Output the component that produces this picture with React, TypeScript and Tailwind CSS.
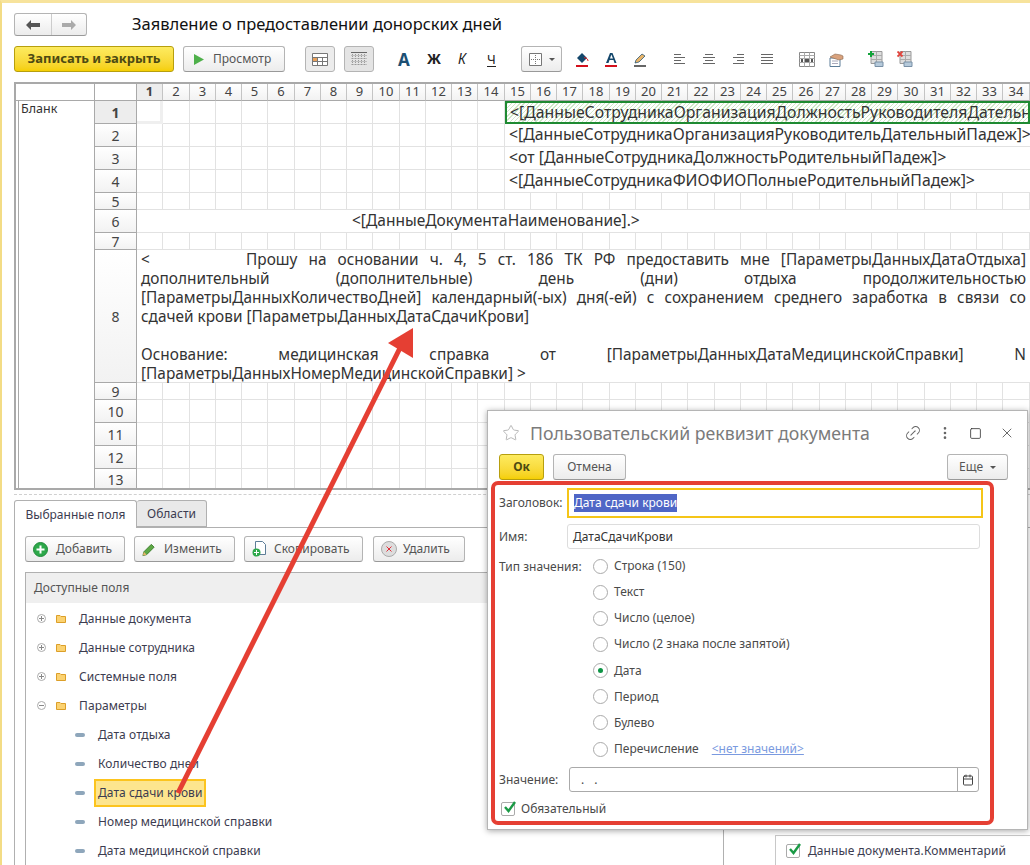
import { Calendar, Link2, MoreVertical, Square, Star, X } from "lucide-react";

const colWidths =
  "grid-cols-[42px_26px_27px_26px_26px_26px_27px_26px_26px_26px_27px_26px_26px_26px_27px_26px_26px_26px_27px_26px_26px_26px_27px_26px_26px_26px_27px_26px_26px_26px_27px_26px_26px_26px_27px]";
const rowHeights = "grid-rows-[17px_23px_23px_23px_23px_17px_23px_17px_133px_17px_23px_23px_23px_21px]";

const columns = Array.from({ length: 34 }, (_, i) => i + 1);
const rows = [1, 2, 3, 4, 5, 6, 7, 8, 9, 10, 11, 12, 13];

const mergedRows: Record<number, string> = {
  1: "<[ДанныеСотрудникаОрганизацияДолжностьРуководителяДательныйПадеж]>",
  2: "<[ДанныеСотрудникаОрганизацияРуководительДательныйПадеж]>",
  3: "<от [ДанныеСотрудникаДолжностьРодительныйПадеж]>",
  4: "<[ДанныеСотрудникаФИОФИОПолныеРодительныйПадеж]>",
};

const treeItems = [
  { label: "Данные документа", kind: "closed" },
  { label: "Данные сотрудника", kind: "closed" },
  { label: "Системные поля", kind: "closed" },
  { label: "Параметры", kind: "open" },
  { label: "Дата отдыха", kind: "leaf" },
  { label: "Количество дней", kind: "leaf" },
  { label: "Дата сдачи крови", kind: "selected" },
  { label: "Номер медицинской справки", kind: "leaf" },
  { label: "Дата медицинской справки", kind: "leaf" },
];

const radioOptions = [
  "Строка (150)",
  "Текст",
  "Число (целое)",
  "Число (2 знака после запятой)",
  "Дата",
  "Период",
  "Булево",
  "Перечисление",
];

function FolderIcon() {
  return (
    <svg width="10" height="9" viewBox="0 0 10 9" className="shrink-0">
      <path d="M.5 1.500h3.500l1 1h4.500v6h-9z" fill="#fbd271" stroke="#dc9f29" />
    </svg>
  );
}

function Expander({ open }: { open: boolean }) {
  return (
    <svg width="9" height="9" viewBox="0 0 9 9" className="shrink-0">
      <circle cx="4.500" cy="4.500" r="4" fill="none" stroke="#aaa" />
      <path d={open ? "M2 4.500h5" : "M2 4.500h5M4.500 2v5"} stroke="#888" />
    </svg>
  );
}

function GreyButton({ className, children }: { className: string; children: React.ReactNode }) {
  return (
    <div
      className={`flex items-center rounded-[3px] border border-[#b4b4b4] border-b-[#999] bg-gradient-to-b from-white to-[#ececec] text-[#555] ${className}`}
    >
      {children}
    </div>
  );
}

function Spreadsheet() {
  return (
    <div className="mt-[10px] flex h-[408px] shrink-0 overflow-hidden border-y-2 border-l-2 border-y-[#a9a9a9] border-l-[#a9a9a9]">
      <div className="w-[78px] shrink-0">
        <div className="h-[17px] border-b border-[#a9a9a9]" />
        <div className="ml-[2px] h-full border-l border-[#a9a9a9] pl-[2px] text-[12.500px] leading-[16px] text-[#333]">Бланк</div>
      </div>
      <div className={`grid ${colWidths} ${rowHeights} border-l border-[#a9a9a9]`}>
        <div className="border-b border-r border-[#a9a9a9]" />
        {columns.map((c) => (
          <div
            key={c}
            className={`flex items-center justify-center border-b border-r border-[#c4c4c4] border-b-[#a9a9a9] text-[13px] ${
              c === 1 ? "bg-[#ededed] font-bold text-[#444]" : "bg-gradient-to-b from-white to-[#f2f2f2] text-[#444]"
            }`}
          >
            {c}
          </div>
        ))}
        {rows.map((r) => (
          <SheetRow key={r} row={r} />
        ))}
      </div>
    </div>
  );
}

function HeaderCell({ row }: { row: number }) {
  return (
    <div
      className={`flex items-center justify-center border-b border-r border-[#a9a9a9] text-[14px] text-[#444] ${
        row === 1 ? "bg-[#ededed] font-bold" : "bg-gradient-to-b from-white to-[#f2f2f2]"
      }`}
    >
      {row}
    </div>
  );
}

function SheetRow({ row }: { row: number }) {
  if (row === 8) {
    return (
      <>
        <HeaderCell row={row} />
        <div className="col-span-34 border-b border-[#e2e2e2] px-[4px] text-[15.400px] leading-[19px] text-[#333]">
          <div className="text-justify [text-align-last:justify]">
            <span className="inline-block w-[94px]">&lt;</span> Прошу на основании ч. 4, 5 ст. 186 ТК РФ предоставить мне [ПараметрыДанныхДатаОтдыха]
          </div>
          <div className="text-justify [text-align-last:justify]">дополнительный (дополнительные) день (дни) отдыха продолжительностью</div>
          <div className="text-justify [text-align-last:justify]">
            [ПараметрыДанныхКоличествоДней] календарный(-ых) дня(-ей) с сохранением среднего заработка в связи со
          </div>
          <div>сдачей крови [ПараметрыДанныхДатаСдачиКрови]</div>
          <div className="h-[19px]" />
          <div className="text-justify [text-align-last:justify]">Основание: медицинская справка от [ПараметрыДанныхДатаМедицинскойСправки] N</div>
          <div>[ПараметрыДанныхНомерМедицинскойСправки] &gt;</div>
        </div>
      </>
    );
  }
  const text = mergedRows[row];
  return (
    <>
      <HeaderCell row={row} />
      {row === 6 ? (
        <>
          <div className="col-span-8 border-b border-[#e2e2e2]" />
          <div className="col-span-26 flex items-center whitespace-nowrap border-b border-[#e2e2e2] pl-[5px] text-[15.500px] text-[#333]">
            &lt;[ДанныеДокументаНаименование].&gt;
          </div>
        </>
      ) : (
        columns.slice(0, text ? 14 : 34).map((c) => (
          <div
            key={c}
            className={`border-b border-r border-[#e2e2e2] ${row === 1 && c === 1 ? "border-b-[3px] border-r-[3px] border-[#efefef]" : ""}`}
          />
        ))
      )}
      {text && (
        <div
          className={`col-span-20 flex items-center overflow-hidden whitespace-nowrap text-[15.800px] text-[#333] ${
            row === 1
              ? "border-2 border-[#1e8a32] pl-[3px] bg-[repeating-linear-gradient(135deg,#cfe9c8_0,#cfe9c8_1px,#ffffff_1px,#ffffff_3px)]"
              : "border-b border-[#e2e2e2] pl-[4px]"
          }`}
        >
          {text}
        </div>
      )}
    </>
  );
}

function Toolbar() {
  return (
    <div className="mt-[10px] flex h-[26px] items-center">
      <div className="flex h-[26px] w-[160px] items-center justify-center rounded-[3px] border border-[#b79f0e] bg-gradient-to-b from-[#fdeb5f] to-[#f5cf00] text-[13px] font-bold text-[#4d4a12]">
        Записать и закрыть
      </div>
      <GreyButton className="ml-[9px] h-[26px] w-[102px] pl-[10px] text-[12px]">
        <svg width="10" height="11" viewBox="0 0 10 11" className="mr-[9px]">
          <path d="M0 0l10 5.500L0 11z" fill="#4eb04a" />
        </svg>
        Просмотр
      </GreyButton>
      <div className="ml-[20px] flex h-[26px] w-[30px] items-center justify-center rounded-[3px] border border-[#b4b4b4] bg-[#ececec]">
        <svg width="16" height="13" viewBox="0 0 16 13">
          <path d="M.5.500h15v12H.500zM.5 4.500h15M.5 8.500h15M5.500 4.500v8M10.500 4.500v8" fill="#fff" stroke="#777" />
          <path d="M1 5h4v3H1z" fill="#e8a05a" />
        </svg>
      </div>
      <div className="ml-[9px] flex h-[26px] w-[30px] items-center justify-center rounded-[3px] border border-[#b4b4b4] bg-[#e4e4e4]">
        <svg width="16" height="14" viewBox="0 0 16 14">
          <path d="M0 .500h16" stroke="#666" />
          <path d="M.5 3.500h15M.5 6.500h15M.5 9.500h15M.5 12.500h15" stroke="#999" strokeDasharray="1 1" />
          <path d="M1.500 2v12M4.500 2v12M7.500 2v12M10.500 2v12M13.500 2v12" stroke="#999" strokeDasharray="1 1" />
        </svg>
      </div>
      <span className="ml-[24px] w-[13px] text-[17px] font-bold leading-none text-[#1c4f73]">А</span>
      <span className="ml-[16px] w-[14px] text-[14px] font-bold leading-none text-[#222]">Ж</span>
      <span className="ml-[17px] w-[10px] text-[14px] italic leading-none text-[#222]">К</span>
      <span className="ml-[19px] w-[9px] border-b border-[#222] text-[13px] leading-[14px] text-[#222]">Ч</span>
      <GreyButton className="ml-[25px] h-[26px] w-[41px] pl-[7px]">
        <svg width="13" height="13" viewBox="0 0 13 13">
          <path d="M.5.500h12v12H.500z" fill="#fff" stroke="#777" />
          <path d="M6.500 2v9M2 6.500h9" stroke="#777" strokeDasharray="1 1" />
        </svg>
        <span className="ml-[7px] h-0 w-0 border-x-[3px] border-t-[3px] border-x-transparent border-t-[#555]" />
      </GreyButton>
      <svg width="13" height="15" viewBox="0 0 13 15" className="ml-[14px]">
        <path d="M1 6l5-5 5 5-5 5z" fill="#14476b" />
        <path d="M8 5.500c3 .5 4 2 4 3.500" fill="none" stroke="#e02020" />
        <path d="M0 13h12v2H0z" fill="#d3101c" />
      </svg>
      <svg width="13" height="15" viewBox="0 0 13 15" className="ml-[16px]">
        <path d="M1 11L5 1h2.500l4 10H9.500l-1-3H4.500l-1 3zM5 6.500h3L6.300 2.500z" fill="#14476b" />
        <path d="M0 13h12v2H0z" fill="#d3101c" />
      </svg>
      <svg width="13" height="15" viewBox="0 0 13 15" className="ml-[16px]">
        <path d="M1 11l1-3 6-6 3 2-6 6z" fill="#e8b46a" stroke="#14476b" strokeWidth=".7" />
        <path d="M0 13h12v2H0z" fill="#666" />
      </svg>
      <svg width="12" height="11" viewBox="0 0 12 11" className="ml-[27px]" stroke="#666">
        <path d="M0 .500h7M0 3.500h11M0 6.500h7M0 9.500h11" />
      </svg>
      <svg width="12" height="11" viewBox="0 0 12 11" className="ml-[17px]" stroke="#666">
        <path d="M2 .500h8M0 3.500h12M2 6.500h8M0 9.500h12" />
      </svg>
      <svg width="12" height="11" viewBox="0 0 12 11" className="ml-[17px]" stroke="#666">
        <path d="M5 .500h7M1 3.500h11M5 6.500h7M1 9.500h11" />
      </svg>
      <svg width="12" height="11" viewBox="0 0 12 11" className="ml-[17px]" stroke="#666">
        <path d="M0 .500h12M0 3.500h12M0 6.500h12M0 9.500h12" />
      </svg>
      <svg width="16" height="15" viewBox="0 0 16 15" className="ml-[26px]">
        <path d="M.5.500h15v14H.500z" fill="#fff" stroke="#888" />
        <path d="M.5 3.500h15M.5 6.500h15M.5 10.500h15M5.500.500v14M10.500.500v14" stroke="#aaa" />
        <path d="M2 7h2v3H2zM6 7h4v3H6zM12 7h2v3h-2z" fill="#555" />
      </svg>
      <svg width="15" height="15" viewBox="0 0 15 15" className="ml-[14px]">
        <path d="M1 6h10v8.500H1z" fill="#fff" stroke="#5d7d98" />
        <path d="M3 9h6M3 11.500h6" stroke="#aab" />
        <path d="M1 5l5-3 6 1 2 1v3l-4 1-3-1z" fill="#d9a27d" stroke="#8a6a50" strokeWidth=".6" />
      </svg>
      <svg width="16" height="16" viewBox="0 0 16 16" className="ml-[24px]">
        <path d="M3 .500h11v12H3z" fill="#ddd" stroke="#999" />
        <path d="M3 4.500h11M3 8.500h11M8.500.500v12" stroke="#aaa" />
        <path d="M2 0h2v2h2v2H4v2H2V4H0V2h2z" fill="#12a33a" />
        <path d="M7 11h8v4.500H7z" fill="#b6cadb" stroke="#7990a6" />
      </svg>
      <svg width="16" height="16" viewBox="0 0 16 16" className="ml-[13px]">
        <path d="M3 .500h11v12H3z" fill="#ddd" stroke="#999" />
        <path d="M3 4.500h11M3 8.500h11M8.500.500v12" stroke="#aaa" />
        <path d="M.5.500l5 5M5.500.500l-5 5" stroke="#e0423a" strokeWidth="1.800" />
        <path d="M7 11h8v4.500H7z" fill="#b6cadb" stroke="#7990a6" />
      </svg>
    </div>
  );
}

function BottomPanel() {
  return (
    <div className="mt-[4px] border-t border-dashed border-[#d0d0d0] pt-[5px]">
      <div className="flex h-[27px]">
        <div className="z-10 flex h-[28px] w-[123px] items-center justify-center rounded-t-[3px] border border-b-0 border-[#b0b0b0] bg-white text-[12px] text-[#3c3c50]">
          Выбранные поля
        </div>
        <div className="flex h-[27px] w-[70px] items-center justify-center rounded-t-[3px] border border-l-0 border-[#b0b0b0] bg-[#e9e9e9] text-[12px] text-[#3c3c50]">
          Области
        </div>
      </div>
      <div className="h-[340px] border-l border-t border-[#b0b0b0] pl-[10px] pt-[8px]">
        <div className="flex h-[26px] items-center">
          <GreyButton className="h-[26px] w-[100px] pl-[7px] text-[12px]">
            <svg width="15" height="15" viewBox="0 0 15 15" className="mr-[8px]">
              <circle cx="7.500" cy="7.500" r="7" fill="#2da84a" stroke="#1f8a39" />
              <path d="M3.500 7.500h8M7.500 3.500v8" stroke="#fff" strokeWidth="2" />
            </svg>
            Добавить
          </GreyButton>
          <GreyButton className="ml-[9px] h-[26px] w-[101px] pl-[7px] text-[12px]">
            <svg width="14" height="15" viewBox="0 0 15 15" className="mr-[8px]">
              <path d="M1 14l1-4 8-8 3 3-8 8z" fill="#5da845" stroke="#3f7f30" />
              <path d="M1 14l1-4 3 3z" fill="#e8b46a" />
            </svg>
            Изменить
          </GreyButton>
          <GreyButton className="ml-[9px] h-[26px] w-[119px] pl-[7px] text-[12px]">
            <svg width="15" height="16" viewBox="0 0 15 16" className="mr-[7px]">
              <path d="M3.500.500h7l3 3v10h-10z" fill="#fff" stroke="#5d7d98" />
              <circle cx="4.500" cy="11.500" r="4" fill="#2da84a" />
              <path d="M2 11.500h5M4.500 9v5" stroke="#fff" />
            </svg>
            Скопировать
          </GreyButton>
          <GreyButton className="ml-[10px] h-[26px] w-[92px] pl-[7px] text-[12px]">
            <svg width="16" height="16" viewBox="0 0 16 16" className="mr-[6px]">
              <circle cx="8" cy="8" r="7.500" fill="#ddd" stroke="#aaa" />
              <path d="M5.500 5.500l5 5M10.500 5.500l-5 5" stroke="#e0303a" />
            </svg>
            Удалить
          </GreyButton>
        </div>
        <div className="mt-[10px] flex">
          <div className="h-[300px] w-[699px] border-l border-r border-t border-[#b0b0b0]">
            <div className="flex h-[30px] items-center bg-[#efefef] pl-[8px] text-[12px] text-[#555]">Доступные поля</div>
            <div className="pt-[1px]">
              {treeItems.map((item) => (
                <TreeRow key={item.label} label={item.label} kind={item.kind} />
              ))}
            </div>
          </div>
          <div className="ml-[51px] mt-[263px] h-[31px] flex-1 border-y border-l border-[#c8c8c8]">
            <div className="flex h-[29px] items-center pl-[10px] text-[12px] tracking-[0.08px] text-[#3c3c50]">
              <Checkbox />
              <span className="ml-[8px] whitespace-nowrap">Данные документа.Комментарий</span>
            </div>
          </div>
        </div>
      </div>
    </div>
  );
}

function Checkbox() {
  return (
    <span className="relative inline-block h-[14px] w-[14px] shrink-0 rounded-[2px] border border-[#aaa] bg-white">
      <svg width="15" height="14" viewBox="0 0 15 14" className="absolute -top-[3px] left-[1px]">
        <path d="M2 7l3.500 4L12 2" fill="none" stroke="#1a9a45" strokeWidth="2.400" />
      </svg>
    </span>
  );
}

function TreeRow({ label, kind }: { label: string; kind: string }) {
  const isFolder = kind === "closed" || kind === "open";
  return (
    <div className="flex h-[29px] items-center text-[12px] tracking-[0.08px] text-[#3c3c50]">
      {isFolder ? (
        <>
          <span className="ml-[11px] mr-[10px]">
            <Expander open={kind === "open"} />
          </span>
          <FolderIcon />
          <span className="ml-[13px]">{label}</span>
        </>
      ) : (
        <>
          <span className="ml-[49px] h-[4px] w-[10px] rounded-[2px] bg-[#8ea6bb]" />
          <span
            className={`ml-[9px] flex h-[28px] items-center ${
              kind === "selected" ? "border-2 border-[#fcc41e] bg-[#fde58e] px-[2px]" : "pl-[4px]"
            }`}
          >
            {label}
          </span>
        </>
      )}
    </div>
  );
}

function Modal() {
  return (
    <div className="absolute left-[485px] top-[407px] h-[420px] w-[541px] border border-[#b5b5b5] bg-white text-[12px] text-[#4a4a4a] shadow-[0_1px_6px_rgba(0,0,0,0.35)]">
      <div className="flex h-[43px] items-center pl-[14px] pt-[1px]">
        <Star size={18} strokeWidth={1} className="text-[#a0a0a0]" />
        <span className="ml-[10px] text-[17.700px] text-[#7b7b7b]">Пользовательский реквизит документа</span>
        <Link2 size={18} strokeWidth={1.300} className="ml-[34px] -rotate-45 text-[#666]" />
        <MoreVertical size={16} strokeWidth={2} className="ml-[15px] text-[#666]" />
        <Square size={13} strokeWidth={1.500} className="ml-[16px] text-[#333]" />
        <X size={16} strokeWidth={1.200} className="ml-[17px] text-[#444]" />
      </div>
      <div className="flex h-[26px] items-center pl-[11px]">
        <div className="flex h-[26px] w-[45px] items-center justify-center rounded-[3px] border border-[#b79f0e] bg-gradient-to-b from-[#fdeb5f] to-[#f5cf00] font-bold text-[#4d4a12]">
          Ок
        </div>
        <GreyButton className="ml-[9px] h-[26px] w-[73px] justify-center">Отмена</GreyButton>
        <GreyButton className="ml-[321px] h-[26px] w-[61px] justify-center">
          Еще
          <span className="ml-[7px] h-0 w-0 border-x-[3px] border-t-[3px] border-x-transparent border-t-[#555]" />
        </GreyButton>
      </div>
      <div className="pl-[11px] pt-[8px]">
        <div className="flex h-[30px] items-center">
          <span className="w-[68px]">Заголовок:</span>
          <div className="flex h-[30px] w-[416px] items-center border-2 border-[#f5c518] pl-[5px]">
            <span className="bg-[#4f66c6] text-white">Дата сдачи крови</span>
          </div>
        </div>
        <div className="mt-[6px] flex h-[25px] items-center">
          <span className="w-[68px]">Имя:</span>
          <div className="flex h-[25px] w-[413px] items-center rounded-[3px] border border-[#ddd] pl-[5px] text-[#333]">ДатаСдачиКрови</div>
        </div>
        <div className="mt-[4px] flex">
          <span className="mt-[1px] h-[26px] w-[94px] leading-[26px]">Тип значения:</span>
          <div>
            {radioOptions.map((option) => (
              <div key={option} className="flex h-[26.150px] items-center">
                <span className="flex h-[15px] w-[15px] items-center justify-center rounded-full border border-[#aaa]">
                  {option === "Дата" && <span className="h-[5px] w-[5px] rounded-full bg-[#0e9445]" />}
                </span>
                <span className="ml-[6px]">{option}</span>
                {option === "Перечисление" && <span className="ml-[13px] text-[#7a9ae0] underline">&lt;нет значений&gt;</span>}
              </div>
            ))}
          </div>
        </div>
        <div className="mt-[5px] flex h-[25px] items-center">
          <span className="w-[70px]">Значение:</span>
          <div className="flex h-[25px] w-[410px] items-center rounded-[3px] border border-[#aaa]">
            <span className="flex-1 pl-[11px] tracking-[3.500px]">. .</span>
            <span className="flex h-full w-[21px] items-center justify-center border-l border-[#aaa]">
              <Calendar size={12} className="text-[#444]" />
            </span>
          </div>
        </div>
        <div className="mt-[7px] flex h-[20px] items-center pl-[2px]">
          <Checkbox />
          <span className="ml-[6px]">Обязательный</span>
        </div>
      </div>
    </div>
  );
}

function Annotation() {
  return (
    <>
      <div className="pointer-events-none absolute left-[489px] top-[478px] h-[344px] w-[503px] rounded-[7px] border-[4px] border-[#e53f33]" />
      <svg width="1030" height="865" viewBox="2 3 1030 865" className="pointer-events-none absolute left-0 top-0">
        <path d="M178 793L404 340" stroke="#e53f33" strokeWidth="5" fill="none" />
        <path d="M413 328L388 343L413 358Z" fill="#e53f33" />
      </svg>
    </>
  );
}

export default function App() {
  return (
    <div className="relative h-[865px] w-[1030px] overflow-hidden border-l-2 border-t-[3px] border-l-[#f3dc85] border-t-[#f7e39c] bg-white font-['Liberation_Sans',Arial,sans-serif]">
      <div className="pl-[12px] pt-[10px]">
        <div className="flex h-[23px] items-center">
          <GreyButton className="h-[23px] w-[73px]">
            <span className="flex h-[21px] w-[37px] items-center justify-center border-r border-[#ccc]">
              <svg width="14" height="10" viewBox="0 0 14 10">
                <path d="M5 0L0 5l5 5V7h9V3H5z" fill="#555" />
              </svg>
            </span>
            <span className="flex h-[21px] w-[35px] items-center justify-center">
              <svg width="14" height="10" viewBox="0 0 14 10">
                <path d="M9 0l5 5-5 5V7H0V3h9z" fill="#aaa" />
              </svg>
            </span>
          </GreyButton>
          <h1 className="ml-[45px] whitespace-nowrap text-[16.500px] font-normal text-[#111]">Заявление о предоставлении донорских дней</h1>
        </div>
        <Toolbar />
        <Spreadsheet />
        <BottomPanel />
      </div>
      <Modal />
      <Annotation />
    </div>
  );
}
